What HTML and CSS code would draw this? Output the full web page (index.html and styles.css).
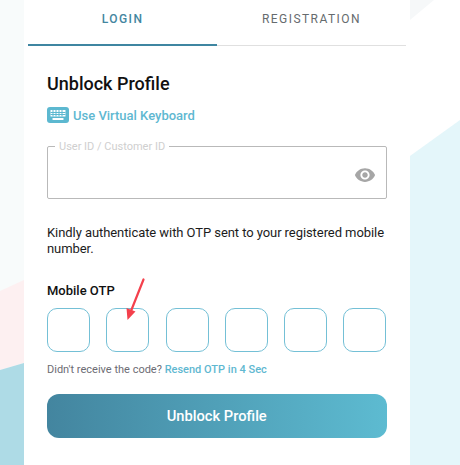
FILE: index.html
```html
<!DOCTYPE html>
<html lang="en">
<head>
<meta charset="utf-8">
<title>Unblock Profile</title>
<link rel="stylesheet" href="styles.css">
</head>
<body>
<svg class="backdrop" width="460" height="465" viewBox="0 0 460 465" aria-hidden="true">
  <rect width="460" height="465" fill="#ffffff"/>
  <rect width="24" height="465" fill="#f8fbfb"/>
  <polygon points="0,291 24,280 24,363 0,370" fill="#fdf0f1"/>
  <polygon points="0,370 24,363 24,465 0,465" fill="#aedbe6"/>
  <polygon points="410,0 434,0 410,20" fill="#f6f8f9"/>
  <polygon points="410,156 460,120 460,465 410,465" fill="#e4f6fa"/>
</svg>
<main class="card">
  <nav class="tabs">
    <a class="tab tab-active">LOGIN</a>
    <a class="tab">REGISTRATION</a>
  </nav>
  <section class="content">
    <h1 class="title">Unblock Profile</h1>
    <a class="keyboard">
      <svg width="22" height="16" viewBox="0 0 22 16" aria-hidden="true">
        <rect width="22" height="16" rx="3" fill="#5cb8d0"/>
        <g fill="#ffffff">
          <rect x="3.500" y="3" width="15" height="6.500" rx="0.500"/>
          <rect x="5.500" y="11" width="11" height="2" rx="0.500"/>
        </g>
        <g fill="#5cb8d0">
          <rect x="5.500" y="3" width="1" height="6.500"/>
          <rect x="8.500" y="3" width="1" height="6.500"/>
          <rect x="11.500" y="3" width="1" height="6.500"/>
          <rect x="14.500" y="3" width="1" height="6.500"/>
          <rect x="3.500" y="5" width="15" height="1"/>
          <rect x="3.500" y="7" width="15" height="1"/>
        </g>
      </svg>
      <span>Use Virtual Keyboard</span>
    </a>
    <fieldset class="field">
      <legend class="field-label">User ID / Customer ID</legend>
      <svg class="eye" width="22" height="22" viewBox="0 0 24 24" aria-hidden="true">
        <path fill="#a6a6a6" d="M12 4.5C7 4.5 2.73 7.61 1 12c1.73 4.39 6 7.5 11 7.5s9.27-3.11 11-7.5c-1.73-4.39-6-7.5-11-7.5zM12 17c-2.76 0-5-2.24-5-5s2.24-5 5-5 5 2.240 5 5-2.240 5-5 5zm0-8c-1.660 0-3 1.340-3 3s1.340 3 3 3 3-1.340 3-3-1.340-3-3-3z"/>
      </svg>
    </fieldset>
    <p class="note">Kindly authenticate with OTP sent to your registered mobile number.</p>
    <h2 class="otp-label">Mobile OTP</h2>
    <div class="otp-row">
      <div class="otp-box"></div>
      <div class="otp-box"></div>
      <div class="otp-box"></div>
      <div class="otp-box"></div>
      <div class="otp-box"></div>
      <div class="otp-box"></div>
    </div>
    <p class="resend">Didn't receive the code? <a class="resend-link">Resend OTP in 4 Sec</a></p>
    <button class="submit" type="button">Unblock Profile</button>
  </section>
</main>
<svg class="arrow" width="30" height="50" viewBox="0 0 30 50" aria-hidden="true">
  <path d="M22.500 1.500 L10 33" stroke="#f4404c" stroke-width="2.200" stroke-linecap="round" fill="none"/>
  <polygon points="6.500,42 5.500,30 14.500,33.500" fill="#f4404c"/>
</svg>
</body>
</html>
```
FILE: styles.css
```css
* { box-sizing: border-box; }
html, body { margin: 0; padding: 0; height: 465px; overflow: hidden; }
body { position: relative; font-family: Roboto, "Liberation Sans", sans-serif; color: #1c1c1c; }
.backdrop { position: absolute; left: 0; top: 0; }
.arrow { position: absolute; left: 121px; top: 278px; }
.card {
  position: relative;
  margin-left: 24px;
  width: 386px;
  height: 465px;
  padding: 0 4px;
  background: #ffffff;
  border-radius: 12px 12px 0 0;
}
.tabs { display: flex; height: 46px; border-bottom: 1px solid #e0e0e0; }
.tab {
  width: 189px;
  height: 46px;
  padding-top: 11px;
  text-align: center;
  font-size: 12px;
  line-height: 16px;
  letter-spacing: 1.45px;
  color: #666b6e;
}
.tab-active { font-weight: 500; color: #43869f; border-bottom: 2px solid #3f86a1; }
.content { padding: 0 19px; }
.title { margin: 27px 0 0; font-size: 18px; line-height: 22px; font-weight: 500; color: #111111; }
.keyboard { display: flex; align-items: center; gap: 4px; margin-top: 11px; height: 18px; font-size: 13px; font-weight: 500; color: #5fb8d1; }
.field {
  display: flex;
  justify-content: flex-end;
  align-items: center;
  margin: 16px 0 0;
  padding: 0 10px 2px 0;
  width: 339.500px;
  height: 59px;
  border: 1px solid #b9b9b9;
  border-radius: 2px;
}
.field-label { margin-left: 7px; padding: 0 4px; font-size: 11px; line-height: 13px; color: #cfcfcf; }
.note { margin: 26px 0 0; font-size: 13px; line-height: 16px; letter-spacing: -0.070px; color: #1c1c1c; }
.otp-label { margin: 26px 0 0; font-size: 13px; line-height: 16px; font-weight: 500; color: #111111; }
.otp-row { display: flex; justify-content: space-between; width: 339.500px; margin-top: 9px; }
.otp-box { width: 43px; height: 44px; border: 1px solid #74c0d6; border-radius: 10px; }
.resend { margin: 11px 0 0; font-size: 11px; line-height: 14px; color: #6c6c74; }
.resend-link { font-weight: 500; color: #5fb8d1; }
.submit {
  display: block;
  width: 339.500px;
  height: 44px;
  margin-top: 17px;
  border: 0;
  border-radius: 12px;
  background: linear-gradient(90deg, #43859f, #5dbbd1);
  color: #ffffff;
  font-family: inherit;
  font-size: 14.700px;
  font-weight: 500;
}
```
